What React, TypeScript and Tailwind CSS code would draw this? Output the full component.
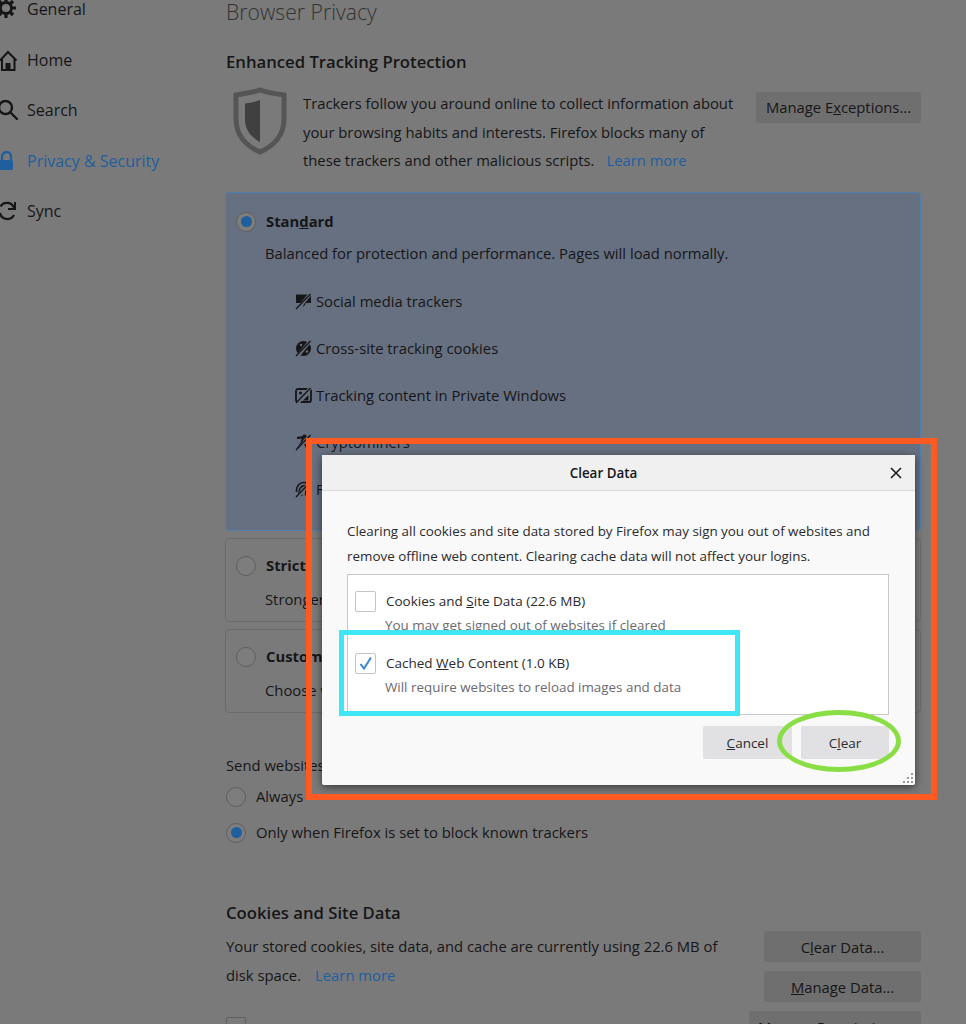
const font = { fontFamily: '"Open Sans", "Noto Sans", sans-serif' };

const navItems = [
  { name: "General", icon: <GearIcon /> },
  { name: "Home", icon: <HomeIcon /> },
  { name: "Search", icon: <SearchIcon /> },
  { name: "Privacy & Security", icon: <LockIcon />, active: true },
  { name: "Sync", icon: <SyncIcon /> },
];

function GearIcon() {
  return (
    <svg viewBox="0 0 22 22" className="h-[22px] w-[22px] shrink-0" fill="none" stroke="#161618">
      <circle cx="8" cy="10" r="5.500" strokeWidth="2.800" />
      <path d="M8 0v4M8 16v4M-2 10h4M14 10h4M1 3l3 3M12 14l3 3M15 3l-3 3M4 14l-3 3" strokeWidth="3.200" />
    </svg>
  );
}

function HomeIcon() {
  return (
    <svg viewBox="0 0 22 22" className="h-[22px] w-[22px] shrink-0" fill="none" stroke="#161618" strokeWidth="2">
      <path d="M2 11.500 10 3l8.500 8.500" />
      <path d="M4 10v11h12.500V10" />
      <rect x="7.500" y="14" width="5" height="7" fill="#161618" stroke="none" />
    </svg>
  );
}

function SearchIcon() {
  return (
    <svg viewBox="0 0 22 22" className="h-[22px] w-[22px] shrink-0" fill="none" stroke="#161618" strokeWidth="2.400">
      <circle cx="7.500" cy="8.500" r="6.500" />
      <path d="m12.500 13.500 6.500 6.500" strokeLinecap="round" />
    </svg>
  );
}

function LockIcon() {
  return (
    <svg viewBox="0 0 22 22" className="h-[22px] w-[22px] shrink-0">
      <path d="M4 10V6.500a4.500 4.500 0 0 1 9 0V10" fill="none" stroke="#1f5f9f" strokeWidth="2.400" />
      <rect x="0" y="10" width="15" height="10" rx="1.500" fill="#1f5f9f" />
    </svg>
  );
}

function SyncIcon() {
  return (
    <svg viewBox="0 0 22 22" className="h-[22px] w-[22px] shrink-0" fill="none" stroke="#161618" strokeWidth="2.200">
      <path d="M16 8a7.500 7.500 0 0 0-13.500-1.500M2 13a7.500 7.500 0 0 0 14 2" />
      <path d="M17 2v7h-7" strokeWidth="2" />
    </svg>
  );
}

function Shield() {
  return (
    <svg viewBox="0 0 58 68" className="h-[68px] w-[58px] shrink-0">
      <path d="M29 3 C20 6 12 7 5 8 V32 C5 48 15 59 29 65 C43 59 53 48 53 32 V8 C46 7 38 6 29 3Z" fill="none" stroke="#555" strokeWidth="5" />
      <path d="M29 13 C24 15 19 16 14 16.500 V33 C14 43 21 51 29 55Z" fill="#404040" />
    </svg>
  );
}

function Radio({ checked = false }: { checked?: boolean }) {
  return (
    <span className="flex h-5 w-5 shrink-0 items-center justify-center rounded-full border border-[#5f5f5f] bg-[#7d7d7d]">
      {checked && <span className="h-[11px] w-[11px] rounded-full bg-[#1f5f9f]" />}
    </span>
  );
}

// every tracker glyph is crossed by the same slash, in the card colour
function TrackerIcon({ kind }: { kind: string }) {
  const shapes: Record<string, React.ReactNode> = {
    social: <path d="M1 1.500h15v8.500h-5l-2.500 4-.5-4H1Z" fill="#161618" />,
    cookie: (
      <g>
        <circle cx="8.500" cy="8.500" r="7.500" fill="#161618" />
        <circle cx="6" cy="5" r="1.200" fill="#677080" />
        <circle cx="12" cy="11.500" r="1.200" fill="#677080" />
      </g>
    ),
    content: (
      <g>
        <rect x="1" y="2" width="15" height="13" rx="2" fill="none" stroke="#161618" strokeWidth="1.800" />
        <path d="M8 13.500 13.500 8v5.500Z" fill="#161618" />
        <circle cx="5.500" cy="6" r="1.500" fill="#161618" />
      </g>
    ),
    miner: (
      <g fill="none" stroke="#161618" strokeWidth="2.200">
        <path d="M2 4c4-1 8-1 13 0" />
        <path d="M8 4 6.500 9l-4 6M7 9l4 2 1.500 4" />
        <circle cx="9.500" cy="2.500" r="1" />
      </g>
    ),
    finger: (
      <g fill="none" stroke="#161618" strokeWidth="1.500">
        <path d="M1.500 11C1 5 5 1 9.500 1.500s6 4 6 8" />
        <path d="M4 14C3 9 6 4.500 9.500 4.500s3.500 4 3.500 7" />
        <path d="M7 15c-1-3 0-7 2.500-7.500s1 4 1 7" />
      </g>
    ),
  };
  return (
    <svg viewBox="0 0 17 17" className="h-[17px] w-[17px] shrink-0 overflow-visible">
      {shapes[kind]}
      <path d="M2.500 16.500 15.500 .5" stroke="#677080" strokeWidth="3.500" />
      <path d="M1 16 15.500 1" stroke="#161618" strokeWidth="1.300" />
    </svg>
  );
}

const trackers = [
  { kind: "social", label: "Social media trackers" },
  { kind: "cookie", label: "Cross-site tracking cookies" },
  { kind: "content", label: "Tracking content in Private Windows" },
  { kind: "miner", label: "Cryptominers" },
  { kind: "finger", label: "Fingerprinters" },
];

function PrefButton({ children, className }: { children: React.ReactNode; className: string }) {
  return (
    <button className={`flex items-center justify-center rounded-[2px] bg-[#6f6f6f] text-[14.800px] text-[#161618] ${className}`}>
      <span>{children}</span>
    </button>
  );
}

function ClearItem({
  checked,
  label,
  hint,
}: {
  checked?: boolean;
  label: React.ReactNode;
  hint: string;
}) {
  return (
    <div className="flex flex-col">
      <div className="flex h-[22px] items-center gap-[10px] pl-[7px]">
        <span className="flex h-[21px] w-[21px] items-center justify-center rounded-[2px] border border-[#c4c4c4] bg-white">
          {checked && (
            <svg viewBox="0 0 16 16" className="h-4 w-4" fill="none" stroke="#3b87d0" strokeWidth="2">
              <path d="M2.500 9 6 13.500 13 2.500" />
            </svg>
          )}
        </span>
        <span className="text-[13.500px] text-[#2a2a2e]">{label}</span>
      </div>
      <p className="mt-[3px] pl-[37px] text-[13.400px] leading-[20px] text-[#6a6a6f]">{hint}</p>
    </div>
  );
}

export default function App() {
  return (
    <div
      style={font}
      className="relative h-[1024px] w-[966px] overflow-hidden bg-[#7a7a7a] text-[#161618]"
    >
      <div className="flex items-start">
        {/* Sidebar */}
        <nav className="-mt-[3px] flex w-[226px] shrink-0 flex-col gap-[26.5px]">
          {navItems.map((item) => (
            <div key={item.name} className="-ml-[2px] flex h-6 items-center gap-[7px]">
              {item.icon}
              <span className={`text-[16px] ${item.active ? "text-[#1f5f9f]" : "text-[#161618]"}`}>
                {item.name}
              </span>
            </div>
          ))}
        </nav>

        {/* Main column */}
        <main className="w-[695px] shrink-0">
          <h1 className="-mt-[5px] text-[21.200px] leading-[34px] font-light text-[#333]">Browser Privacy</h1>

          <h2 className="mt-[21px] text-[16.700px] leading-[24px] font-semibold">Enhanced Tracking Protection</h2>

          <div className="mt-[13px] flex items-start pl-[5px]">
            <Shield />
            <p className="mt-[2px] ml-[14px] w-[440px] text-[14.800px] leading-[28.500px]">
              Trackers follow you around online to collect information about your browsing habits and interests. Firefox
              blocks many of
              <br />
              these trackers and other malicious scripts.
              <span className="ml-[12px] text-[#1f5f9f]">Learn more</span>
            </p>
            <PrefButton className="mt-[5px] ml-auto h-[31px] w-[165px]">
              Manage E<u>x</u>ceptions...
            </PrefButton>
          </div>

          <section className="mt-[17px] -ml-px h-[339px] rounded-[4px] border border-[#4f7fae] bg-[#677080] pt-[17px] pl-[10px]">
            <div className="flex h-6 items-center gap-[10px]">
              <Radio checked />
              <span className="text-[14.800px] font-bold">
                Stan<u>d</u>ard
              </span>
            </div>
            <p className="mt-[7px] pl-[29px] text-[14.800px] leading-6">
              Balanced for protection and performance. Pages will load normally.
            </p>
            <ul className="mt-[25px] flex flex-col gap-[23px] pl-[59px]">
              {trackers.map((t) => (
                <li key={t.kind} className="flex h-6 items-center gap-[4px] text-[14.800px]">
                  <TrackerIcon kind={t.kind} />
                  {t.label}
                </li>
              ))}
            </ul>
          </section>

          <section className="mt-[7px] -ml-px h-[84px] rounded-[4px] border border-[#6c6c6c] pt-[15px] pl-[10px]">
            <div className="flex h-6 items-center gap-[10px]">
              <Radio />
              <span className="text-[14.800px] font-bold">Strict</span>
            </div>
            <p className="mt-[9px] pl-[29px] text-[14.800px] leading-6">Stronger protection, but may cause some sites to break.</p>
          </section>

          <section className="mt-[7px] -ml-px h-[84px] rounded-[4px] border border-[#6c6c6c] pt-[15px] pl-[10px]">
            <div className="flex h-6 items-center gap-[10px]">
              <Radio />
              <span className="text-[14.800px] font-bold">Custom</span>
            </div>
            <p className="mt-[9px] pl-[29px] text-[14.800px] leading-6">Choose which trackers and scripts to block.</p>
          </section>

          <p className="mt-[40px] text-[14.800px] leading-6">Send websites a signal</p>
          <div className="mt-[8px] flex h-6 items-center gap-[10px] text-[14.800px]">
            <Radio />
            Always
          </div>
          <div className="mt-3 flex h-6 items-center gap-[10px] text-[14.800px]">
            <Radio checked />
            Only when Firefox is set to block known trackers
          </div>

          <div className="mt-[86px] flex items-start">
            <div className="w-[520px]">
              <h2 className="-mt-[30px] text-[16.700px] leading-[24px] font-semibold">Cookies and Site Data</h2>
              <p className="mt-[7px] w-[510px] text-[14.800px] leading-[29px]">
                Your stored cookies, site data, and cache are currently using 22.6 MB of disk space.
                <span className="ml-[14px] text-[#1f5f9f]">Learn more</span>
              </p>
              <span className="mt-[27px] block h-5 w-5 rounded-[2px] border border-[#5f5f5f]" />
            </div>
            <div className="ml-auto flex flex-col items-end gap-[9px]">
              <PrefButton className="h-[31px] w-[157px] pt-[3px]">
                C<u>l</u>ear Data...
              </PrefButton>
              <PrefButton className="h-[31px] w-[157px] pt-[3px]">
                <u>M</u>anage Data...
              </PrefButton>
              <PrefButton className="h-[31px] w-[172px] pt-[3px]">Manage Permissions...</PrefButton>
            </div>
          </div>
        </main>
      </div>

      {/* Clear Data dialog */}
      <div className="absolute top-[455px] left-[322px] flex h-[330px] w-[593px] flex-col rounded-[2px] bg-[#f9f9f9] shadow-[0_2px_8px_rgba(0,0,0,0.55)]">
        <div className="relative flex h-[36px] shrink-0 items-center justify-center border-b border-[#dcdcdc] bg-[#f0f0f0] pr-[30px]">
          <span className="mt-[2px] text-[13.400px] font-semibold text-[#161618]">Clear Data</span>
          <svg viewBox="0 0 12 12" className="absolute right-[13px] h-3 w-3" stroke="#161618" strokeWidth="1.500">
            <path d="m1 1 10 10M11 1 1 11" />
          </svg>
        </div>
        <div className="flex flex-1 flex-col px-[25px] pt-[28px]">
          <p className="text-[13.400px] leading-[25px] text-[#2a2a2e]">
            Clearing all cookies and site data stored by Firefox may sign you out of websites and
            <br />
            remove offline web content. Clearing cache data will not affect your logins.
          </p>
          <div className="mt-[5px] flex h-[141px] w-[542px] flex-col gap-[17px] border border-[#c8c8c8] bg-white pt-[15px]">
            <ClearItem
              label={<>Cookies and <u>S</u>ite Data (22.6 MB)</>}
              hint="You may get signed out of websites if cleared"
            />
            <ClearItem
              checked
              label={<>Cached <u>W</u>eb Content (1.0 KB)</>}
              hint="Will require websites to reload images and data"
            />
          </div>
          <div className="mt-[11px] flex justify-end gap-[9px] pr-[1px]">
            <button className="h-[33px] w-[89px] rounded-[2px] bg-[#e1e1e3] pt-[2px] text-[13.500px] text-[#2a2a2e]"><u>C</u>ancel</button>
            <button className="h-[33px] w-[88px] rounded-[2px] bg-[#e1e1e3] pt-[2px] text-[13.500px] text-[#2a2a2e]">C<u>l</u>ear</button>
          </div>
        </div>
        <svg viewBox="0 0 10 10" className="absolute right-[2px] bottom-[2px] h-[10px] w-[10px]" fill="#999">
          <path d="M8 0h2v2H8zM4 4h2v2H4zM8 4h2v2H8zM0 8h2v2H0zM4 8h2v2H4zM8 8h2v2H8z" />
        </svg>
      </div>

      {/* Screenshot annotations */}
      <div className="absolute top-[438px] left-[306px] h-[362px] w-[631px] border-[6px] border-[#ff5a22]" />
      <div className="absolute top-[630px] left-[339px] h-[86px] w-[401px] border-[5px] border-[#3fe6f5]" />
      <div className="absolute top-[710px] left-[777px] h-[62px] w-[124px] rounded-[50%] border-[5px] border-[#8ade45]" />
    </div>
  );
}
